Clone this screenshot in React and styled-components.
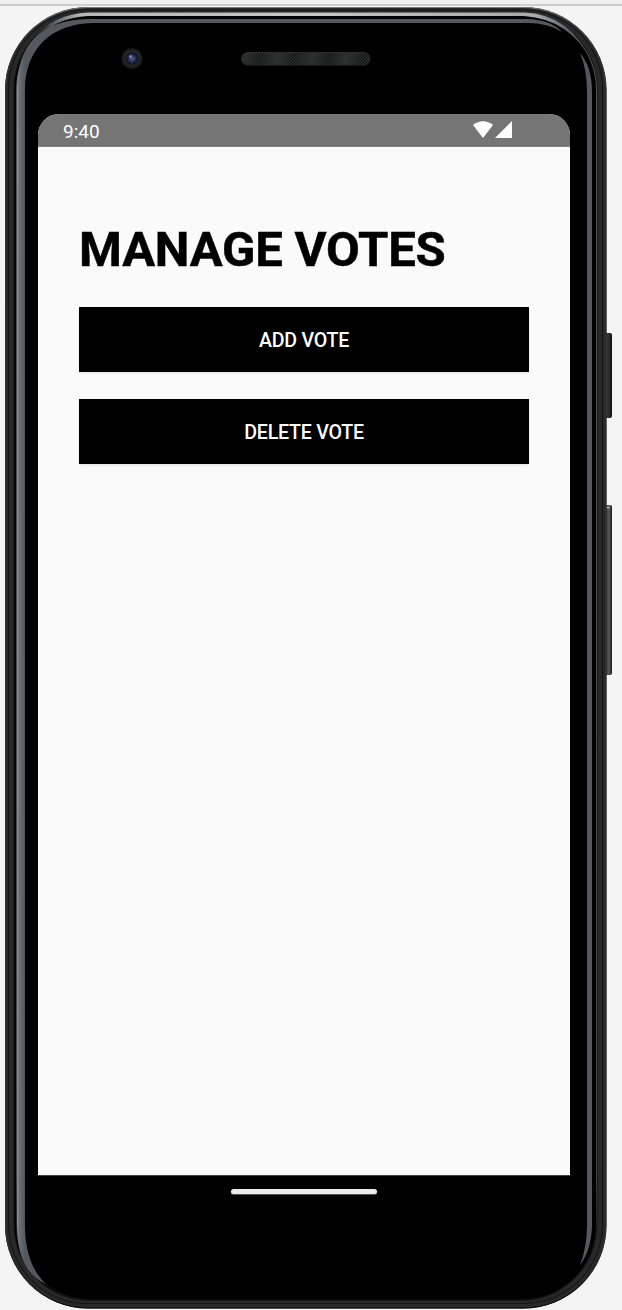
import React from "react";
import styled, { createGlobalStyle } from "styled-components";

const GlobalStyle = createGlobalStyle`
  * { box-sizing: border-box; }
  body { margin: 0; background: #f4f4f4; font-family: Roboto, sans-serif; overflow: hidden; }
`;

const Stage = styled.main`
  position: relative;
  width: 622px;
  height: 1310px;
  padding: 114px 52px 0 38px;
  background: #f4f4f4;
  overflow: hidden;
`;

const Shell = styled.svg`
  position: absolute;
  inset: 0;
  width: 622px;
  height: 1310px;
`;

const Screen = styled.section`
  position: relative;
  display: flex;
  flex-direction: column;
  width: 532px;
  height: 1061px;
  background: #fafafa;
  border-radius: 21px 21px 0 0;
  overflow: hidden;
`;

const StatusBar = styled.header`
  display: flex;
  align-items: center;
  justify-content: space-between;
  height: 33px;
  flex: none;
  padding: 0 58px 0 25px;
  background: #757575;
  border-bottom: 1px solid #858585;
`;

const Clock = styled.time`
  color: #fff;
  font-size: 19px;
  line-height: 24px;
  padding-top: 3px;
`;

const StatusIcons = styled.svg`
  display: block;
  width: 39px;
  height: 18px;
`;

const Content = styled.div`
  display: flex;
  flex-direction: column;
  padding: 74px 41px 0;
`;

const Title = styled.h1`
  margin: 0 0 29px;
  color: #000;
  font-size: 49px;
  line-height: 57px;
  font-weight: 700;
  letter-spacing: -0.2px;
  -webkit-text-stroke: 0.5px #000;
  white-space: nowrap;
`;

const Actions = styled.div`
  display: flex;
  flex-direction: column;
  gap: 27px;
`;

const ActionButton = styled.button`
  height: 65px;
  padding: 2px 0 0;
  border: 0;
  background: #000;
  color: #fff;
  font: 500 19.6px/24px Roboto, sans-serif;
  letter-spacing: -0.25px;
  box-shadow: 0 1px 2px rgba(0, 0, 0, 0.1);
`;

const NavigationBar = styled.footer`
  position: relative;
  display: flex;
  justify-content: center;
  width: 532px;
  padding-top: 13px;
  border-top: 1px solid #3c3f3f;
`;

const HomeHandle = styled.div`
  width: 146px;
  height: 5px;
  border-radius: 3px;
  background: #ececec;
  box-shadow: 0 1px 0 #555;
`;

function PhoneShell() {
  return (
    <Shell viewBox="0 0 622 1310" aria-hidden="true">
      <defs>
        <linearGradient id="innerEdge" x1="0" y1="0" x2="0" y2="1">
          <stop offset="0" stopColor="#777" />
          <stop offset=".04" stopColor="#555657" />
          <stop offset=".9" stopColor="#414243" />
          <stop offset=".96" stopColor="#161616" />
          <stop offset="1" stopColor="#161616" />
        </linearGradient>
        <linearGradient id="outerEdge" x1="0" y1="0" x2="0" y2="1">
          <stop offset="0" stopColor="#777" />
          <stop offset=".03" stopColor="#373737" />
          <stop offset=".95" stopColor="#353535" />
          <stop offset="1" stopColor="#090909" />
        </linearGradient>
        <linearGradient id="topShine" x1="36" y1="0" x2="592" y2="0" gradientUnits="userSpaceOnUse">
          <stop offset="0" stopColor="#222" />
          <stop offset=".08" stopColor="#b6b8ba" />
          <stop offset=".5" stopColor="#c4c6c8" />
          <stop offset=".9" stopColor="#a7a9ac" />
          <stop offset="1" stopColor="#303133" />
        </linearGradient>
        <linearGradient id="leftShine" x1="17" y1="0" x2="25" y2="0" gradientUnits="userSpaceOnUse">
          <stop offset="0" stopColor="#8a8d91" />
          <stop offset=".35" stopColor="#686b71" />
          <stop offset="1" stopColor="#55585e" />
        </linearGradient>
        <radialGradient id="lens">
          <stop offset="0" stopColor="#53608e" />
          <stop offset=".35" stopColor="#252c56" />
          <stop offset=".52" stopColor="#10131f" />
          <stop offset=".65" stopColor="#242426" />
          <stop offset="1" stopColor="#19191a" />
        </radialGradient>
        <linearGradient id="buttonShine">
          <stop offset="0" stopColor="#222" />
          <stop offset=".5" stopColor="#333" />
          <stop offset="1" stopColor="#101010" />
        </linearGradient>
        <linearGradient id="powerShine">
          <stop offset="0" stopColor="#1e1e1e" />
          <stop offset=".6" stopColor="#5a5a5a" />
          <stop offset="1" stopColor="#161616" />
        </linearGradient>
        <pattern id="mesh" width="3" height="3" patternUnits="userSpaceOnUse">
          <path d="M0 0h1v1h-1zM2 1h1v1h-1zM1 2h1v1h-1z" fill="#3b3d3d" />
        </pattern>
        <linearGradient id="meshBands" x1="0" y1="0" x2="32" y2="9" gradientUnits="userSpaceOnUse" spreadMethod="repeat">
          <stop offset="0" stopColor="#171818" />
          <stop offset=".5" stopColor="#2b2d2d" />
          <stop offset="1" stopColor="#171818" />
        </linearGradient>
      </defs>
      <rect width="622" height="4" fill="#f0f0f0" />
      <rect y="4" width="622" height="2" fill="#cecece" />
      <rect x="604" y="333" width="8" height="85" rx="2" fill="url(#buttonShine)" />
      <rect x="604" y="505" width="8" height="170" rx="2" fill="url(#powerShine)" />
      <path d="M606 507.500h4" stroke="#999" strokeWidth="2" />
      <rect x="5" y="7" width="601.500" height="1301.500" rx="83" fill="#282828" />
      <rect x="5.500" y="7.500" width="600.500" height="1300.500" rx="82.500" fill="none" stroke="url(#outerEdge)" strokeWidth="1" />
      <rect x="8.500" y="10" width="594" height="1293.500" rx="79" fill="none" stroke="#131313" strokeWidth="1" />
      <rect x="14" y="13" width="583" height="1287.500" rx="76" fill="#000" stroke="#111" strokeWidth="1" />
      <rect x="16.500" y="14.500" width="580" height="1285.500" rx="75" fill="#000" stroke="url(#innerEdge)" strokeWidth="1" />
      <path d="M33 39Q53 14 88 12.500H524Q570 14 592 62Q570 19 524 16H88Q55 18 33 39Z" fill="url(#topShine)" />
      <path d="M17 90C17 45 40 20 88 19H528Q551 20 562 32Q548 23 528 23H92C50 24 25 50 25 90V1225C25 1256 35 1274 46 1284C28 1276 17 1258 17 1225Z" fill="url(#leftShine)" />
      <path d="M580 53Q592 67 592 92V1226Q591 1251 580 1265Q587 1247 587 1226V92Q587 69 580 53Z" fill="#56585f" />
      <circle cx="132" cy="58.500" r="10.500" fill="url(#lens)" />
      <circle cx="130.500" cy="56.500" r="1.200" fill="#8795bb" />
      <rect x="241.500" y="52.500" width="128.500" height="12.500" rx="6.200" fill="url(#meshBands)" stroke="#2b2d2d" />
      <rect x="242" y="53" width="127" height="11" rx="5.500" fill="url(#mesh)" opacity=".65" />
    </Shell>
  );
}

export default function App() {
  return (
    <>
      <GlobalStyle />
      <Stage>
        <PhoneShell />
        <Screen>
          <StatusBar>
            <Clock>9:40</Clock>
            <StatusIcons viewBox="0 0 39 18" aria-label="Wi-Fi and cellular signal">
              <path d="M0 4Q10-3.500 20 4L10 17Z" fill="#fff" />
              <path d="M22 17L39 0V17Z" fill="#fff" />
            </StatusIcons>
          </StatusBar>
          <Content>
            <Title>MANAGE VOTES</Title>
            <Actions>
              <ActionButton>ADD VOTE</ActionButton>
              <ActionButton>DELETE VOTE</ActionButton>
            </Actions>
          </Content>
        </Screen>
        <NavigationBar><HomeHandle /></NavigationBar>
      </Stage>
    </>
  );
}
